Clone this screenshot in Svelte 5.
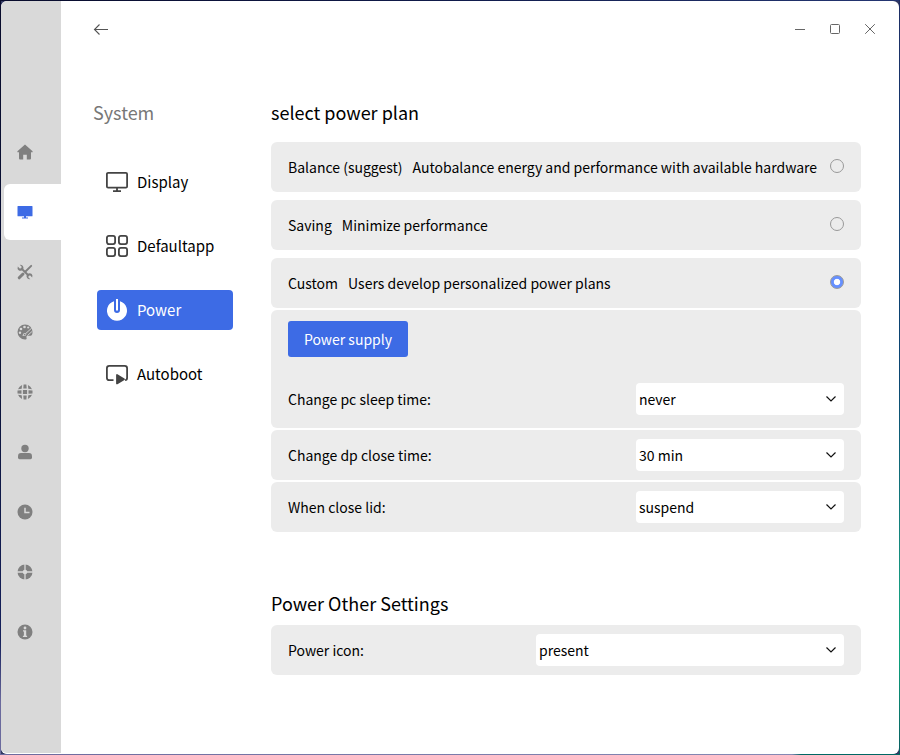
<script>
  let plan = $state('Custom');
  let activeNav = $state('Power');

  const plans = [
    { name: 'Balance (suggest)', note: 'Autobalance energy and performance with available hardware' },
    { name: 'Saving', note: 'Minimize performance' },
    { name: 'Custom', note: 'Users develop personalized power plans' }
  ];
  const nav = ['Display', 'Defaultapp', 'Power', 'Autoboot'];
  const rail = ['home', 'system', 'tools', 'palette', 'network', 'user', 'time', 'update', 'about'];
</script>

{#snippet choice(value, wide)}
  <button class="select" class:wide>
    <span>{value}</span>
    <svg width="12" height="8" viewBox="0 0 12 8"><path d="M1.5 1.5 6 6l4.500-4.500" fill="none" stroke="#111" stroke-width="1.200" /></svg>
  </button>
{/snippet}

<div class="desktop">
  <div class="window">
    <aside>
      {#each rail as item}
        <button class="tab" class:active={item === 'system'} aria-label={item}>
          <svg width="16" height="16" viewBox="0 0 16 16" fill="currentColor">
            {#if item === 'home'}
              <path d="M8 .5 15.6 7.2v1H14v6.3q0 1-1 1H9.8V10.7H6.2v4.8H3q-1 0-1-1V8.2H.4v-1Z" />
            {:else if item === 'system'}
              <path d="M1 2h14q.5 0 .5.5v9.3q0 .5-.5.5H1q-.5 0-.5-.5V2.500Q.5 2 1 2ZM7 12.300h2v1.200h2v1H5v-1h2Z" />
            {:else if item === 'tools'}
              <path d="M14.200 1.800 8.500 7.500" stroke="currentColor" stroke-width="1.900" stroke-linecap="round" />
              <path d="M6 10 2.200 13.800" stroke="currentColor" stroke-width="3" stroke-linecap="round" />
              <path d="M4 4 12 12" stroke="currentColor" stroke-width="2" />
              <path d="M2.700.7 4.900 2.900 4.700 4.600 3 4.800.8 2.600Q0 5 1.600 6.200 3.300 7.300 5 6.200L6.300 5Q6.900 3 5.700 1.700 4.400.4 2.700.7ZM13.300 15.300 11.100 13.100 11.300 11.400 13 11.200 15.200 13.400Q16 11 14.400 9.800 12.700 8.700 11 9.800L9.700 11Q9.100 13 10.300 14.300 11.600 15.600 13.300 15.300Z" />
            {:else if item === 'palette'}
              <path d="M8 .5a7.500 7.500 0 1 0 0 15c1.500 0 2-.9 1.500-2-.4-1 .3-1.700 1.500-1.700h2.500c1.300 0 2-1.500 2-3.300A7.500 7.500 0 0 0 8 .5Z" />
              <g fill="#d9d9d9"><circle cx="4" cy="5" r="1.300" /><circle cx="7.500" cy="3" r="1.300" /><circle cx="11.200" cy="3.500" r="1.100" /><circle cx="3" cy="8.700" r="1.200" /></g>
              <path d="M14.800 4 8 10.200M15 7.500 10.500 11.500" stroke="#d9d9d9" stroke-width=".9" />
              <path d="M8 9Q5.800 9 5.600 12q2.900.5 3.800-1.500" fill="#d9d9d9" />
              <path d="M8 9.600Q6.600 10 6.500 11.500 8.200 11.500 8.700 10.500Z" />
            {:else if item === 'network'}
              <path d="M5.900 5.900h4.200v4.200H5.900ZM.5 6.600 4.500 6.300v3.400L.5 9.400ZM15.500 6.600 11.500 6.300v3.400l4-.3ZM6.600.5h2.800l.3 4H6.300ZM6.600 15.500h2.800l.3-4H6.300ZM5.100 1 4.700 4.700 1 5.200Q2.200 2.200 5.100 1ZM10.900 1l.4 3.700 3.700.5Q13.800 2.200 10.900 1ZM5.100 15l-.4-3.700L1 10.800Q2.200 13.800 5.100 15ZM10.900 15l.4-3.700 3.700-.5q-1.200 3-4.100 4.200Z" />
            {:else if item === 'user'}
              <circle cx="8" cy="4.500" r="3.700" />
              <path d="M4 9h8q3 0 3 3.300v1.200q0 1.700-1.500 1.700h-11Q1 15.200 1 13.500v-1.200Q1 9 4 9Z" />
            {:else if item === 'time'}
              <circle cx="8" cy="8" r="7.500" />
              <path d="M8 3.700v4.700h4.500" fill="none" stroke="#d9d9d9" stroke-width="1.500" />
            {:else if item === 'update'}
              <circle cx="8" cy="8" r="7.500" />
              <circle cx="8" cy="8" r="2.300" fill="#d9d9d9" />
              <path d="M8 0v16M0 8h16" stroke="#d9d9d9" stroke-width="1.300" />
            {:else}
              <circle cx="8" cy="8" r="7.500" />
              <circle cx="8" cy="4" r="1.400" fill="#d9d9d9" />
              <path d="M6 6.200h3.200v5.600h.9v1.300H5.900v-1.300h1V7.500H6Z" fill="#d9d9d9" />
            {/if}
          </svg>
        </button>
      {/each}
    </aside>

    <section class="page">
      <header>
        <button class="back" aria-label="Back">
          <svg width="16" height="14" viewBox="0 0 16 14"><path d="M6.500 1.500 1.500 6.500 6.500 11.500M2 6.500h13" fill="none" stroke="#555" stroke-width="1.100" /></svg>
        </button>
        <div class="controls">
          <svg width="11" height="11" viewBox="0 0 11 11"><path d="M0 5.500h10" /></svg>
          <svg width="11" height="11" viewBox="0 0 11 11"><rect x=".5" y=".5" width="9" height="9" rx="1" /></svg>
          <svg width="11" height="11" viewBox="0 0 11 11"><path d="m.2.200 9.600 9.600M9.800.200.2 9.800" /></svg>
        </div>
      </header>

      <div class="body">
        <nav>
          <h2>System</h2>
          {#each nav as item}
            <button class="link" class:active={activeNav === item} onclick={() => (activeNav = item)}>
              <svg width="24" height="24" viewBox="0 0 24 24" fill="none" stroke="#444" stroke-width="1.800">
                {#if item === 'Display'}
                  <rect x="1.900" y="2.900" width="20.200" height="14.700" rx="1.200" /><path d="M12 17.500v3M8 21.100h8" />
                {:else if item === 'Defaultapp'}
                  <rect x="1.900" y="1.900" width="8.200" height="8.200" rx="2" /><rect x="13.900" y="1.900" width="8.200" height="8.200" rx="2" /><rect x="1.900" y="13.900" width="8.200" height="8.200" rx="2" /><rect x="13.900" y="13.900" width="8.200" height="8.200" rx="2" />
                {:else if item === 'Power'}
                  <path d="M9 3.200A10 10 0 1 0 15 3.200V12a3 3 0 0 1-6 0Z" fill="#fff" stroke="none" />
                  <path d="M12 1v11.500" stroke="#fff" stroke-width="2" />
                {:else}
                  <path d="M8.500 18.100H4.300q-2.400 0-2.400-2.400V6.300q0-2.400 2.400-2.400h15.400q2.400 0 2.400 2.400v9.400q0 2.400-2 2.400" /><path d="M12 13v8.400l7-4.200Z" fill="#444" stroke-linejoin="round" />
                {/if}
              </svg>
              <span>{item}</span>
            </button>
          {/each}
        </nav>

        <main>
          <h1>select power plan</h1>
          <div class="plans">
            {#each plans as p}
              <label class="card">
                <span>{p.name}</span>
                <span class="note">{p.note}</span>
                <input type="radio" name="plan" value={p.name} bind:group={plan} />
              </label>
            {/each}
          </div>
          <div class="details">
            <div class="card supply">
              <button class="primary">Power supply</button>
              <div class="row"><span>Change pc sleep time:</span>{@render choice('never', false)}</div>
            </div>
            <div class="card"><span>Change dp close time:</span>{@render choice('30 min', false)}</div>
            <div class="card"><span>When close lid:</span>{@render choice('suspend', false)}</div>
          </div>
          <h1 class="other">Power Other Settings</h1>
          <div class="card"><span>Power icon:</span>{@render choice('present', true)}</div>
        </main>
      </div>
    </section>
  </div>
</div>

<style>
  .desktop {
    box-sizing: border-box;
    width: 900px;
    height: 755px;
    padding: 1px;
    background:
      linear-gradient(90deg, #6d6a9e, #8589b4 88%, #006763 89%) 0 100% / 100% 1px no-repeat,
      linear-gradient(#1e2d64, #0b3b70 28%, #0b4672 50%, #159a80 78%, #0ca27c 87%, #075c60) 100% 0 / 1px 100% no-repeat,
      linear-gradient(#080b2b, #0a1238 50%, #15205b 85%, #6b6a9d 93%) 0 0 / 1px 100% no-repeat,
      linear-gradient(90deg, #080b2b, #101b4b 50%, #243672) 0 0 / 100% 1px no-repeat,
      #333962;
    font: 15px/24px "Noto Sans CJK SC", "Noto Sans", sans-serif;
    color: #000;
  }
  button {
    border: 0;
    padding: 0;
    font: inherit;
    color: inherit;
    background: none;
  }
  svg { display: block; flex: none; }
  .window {
    display: flex;
    box-sizing: border-box;
    height: 753px;
    border-bottom: 1px solid #fff;
    border-radius: 6px;
    overflow: hidden;
    background: #fff;
  }
  aside {
    box-sizing: border-box;
    flex: none;
    display: flex;
    flex-direction: column;
    gap: 4px;
    width: 60px;
    padding: 123px 0 0 3px;
    background: #d9d9d9;
  }
  .tab {
    display: flex;
    align-items: center;
    flex: none;
    height: 56px;
    padding-left: 13px;
    border-radius: 6px 0 0 6px;
    color: #808080;
  }
  .tab.active { background: #fff; color: #3d6be5; }
  .page { flex: 1; display: flex; flex-direction: column; }
  header {
    display: flex;
    align-items: center;
    justify-content: space-between;
    height: 57px;
    padding: 0 23px 0 32px;
  }
  .controls { display: flex; gap: 24px; }
  .controls svg { fill: none; stroke: #666; stroke-width: 1; }
  .body { display: flex; padding-top: 39px; }
  nav { width: 210px; flex: none; display: flex; flex-direction: column; }
  h1, h2 {
    margin: 0;
    font-size: 18px;
    line-height: 30px;
    font-weight: 400;
  }
  h2 { padding-left: 32px; color: #777; margin-bottom: 35px; }
  .link {
    display: flex;
    align-items: center;
    gap: 8px;
    width: 136px;
    height: 40px;
    margin: 0 0 24px 36px;
    padding-left: 8px;
    border-radius: 4px;
  }
  .link.active { background: #3d6be5; color: #fff; }
  main { width: 590px; font-size: 14px; }
  .plans { display: flex; flex-direction: column; gap: 8px; margin-top: 15px; }
  .card {
    box-sizing: border-box;
    display: flex;
    align-items: center;
    height: 50px;
    padding: 0 17px;
    border-radius: 6px;
    background: #ececec;
    white-space: nowrap;
  }
  .note { margin-left: 10px; }
  input {
    appearance: none;
    box-sizing: border-box;
    flex: none;
    width: 14px;
    height: 14px;
    margin: 0 0 3px auto;
    border: 1px solid #999;
    border-radius: 50%;
  }
  input:checked {
    background: radial-gradient(circle, #fff 2.800px, #6690ff 3.600px);
  }
  .details { display: flex; flex-direction: column; gap: 2px; margin-top: 2px; }
  .supply { display: block; height: 118px; padding-top: 11px; }
  .row { display: flex; align-items: center; margin-top: 26px; }
  .primary {
    display: block;
    width: 120px;
    height: 36px;
    border-radius: 3px;
    background: #3d6be5;
    color: #fff;
  }
  .select {
    display: flex;
    align-items: center;
    justify-content: space-between;
    width: 208px;
    height: 32px;
    margin-left: auto;
    padding: 0 7px 0 3px;
    border-radius: 4px;
    background: #fff;
  }
  .select.wide { width: 308px; }
  .other { margin: 56px 0 7px; }
</style>
